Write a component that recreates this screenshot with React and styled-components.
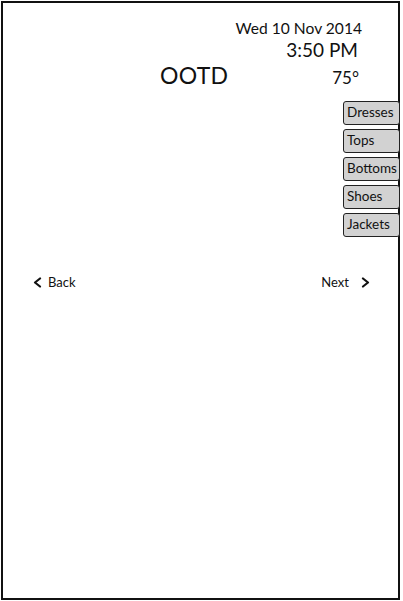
import React from "react";
import styled, { createGlobalStyle } from "styled-components";

const Global = createGlobalStyle`
  html, body { margin: 0; padding: 0; background: #fff; }
  body { font-family: Lato, "Open Sans", sans-serif; color: #111; }
  * { box-sizing: border-box; }
`;

const Frame = styled.div`
  margin: 1px 0 0 1px;
  width: 399px;
  height: 599px;
  border: 2px solid #111;
  display: flex;
  flex-direction: column;
`;

const Header = styled.div`
  display: flex;
  flex-direction: column;
  align-items: flex-end;
  padding: 15px 36px 0 0;
`;

const DateLine = styled.div`
  font-size: 15.6px;
  line-height: 20px;
`;

const TimeLine = styled.div`
  font-size: 19px;
  line-height: 24px;
  margin-right: 4px;
`;

const TitleRow = styled.div`
  align-self: stretch;
  display: flex;
  justify-content: space-between;
  align-items: baseline;
  padding-left: 157px;
`;

const Title = styled.div`
  font-size: 23px;
  line-height: 26px;
  letter-spacing: 0.3px;
`;

const Temp = styled.div`
  font-size: 17px;
  line-height: 22px;
  margin-right: 3px;
`;

const Tabs = styled.div`
  align-self: flex-end;
  display: flex;
  flex-direction: column;
  gap: 4px;
  margin-top: 12px;
  margin-right: -2px;
`;

const Tab = styled.div`
  width: 57px;
  height: 24px;
  background: #d2d2d2;
  border: 1.5px solid #222;
  border-radius: 3px;
  font-size: 13.5px;
  line-height: 21px;
  padding-left: 3px;
  white-space: nowrap;
`;

const NavRow = styled.div`
  display: flex;
  justify-content: space-between;
  align-items: center;
  padding: 0 28px 0 30px;
  margin-top: 37px;
`;

const NavButton = styled.div`
  display: flex;
  align-items: center;
  gap: ${(p) => p.$gap}px;
  font-size: 13px;
  line-height: 16px;
`;

const Chevron = ({ dir }) => (
  <svg width="9" height="11" viewBox="0 0 9 11">
    <path
      d={dir === "left" ? "M7 1.5 L2 5.5 L7 9.5" : "M2 1.5 L7 5.5 L2 9.5"}
      fill="none"
      stroke="#111"
      strokeWidth="2.2"
      strokeLinecap="round"
      strokeLinejoin="round"
    />
  </svg>
);

export default function App() {
  return (
    <>
      <Global />
      <Frame>
        <Header>
          <DateLine>Wed 10 Nov 2014</DateLine>
          <TimeLine>3:50 PM</TimeLine>
          <TitleRow>
            <Title>OOTD</Title>
            <Temp>75°</Temp>
          </TitleRow>
        </Header>
        <Tabs>
          {["Dresses", "Tops", "Bottoms", "Shoes", "Jackets"].map((t) => (
            <Tab key={t}>{t}</Tab>
          ))}
        </Tabs>
        <NavRow>
          <NavButton $gap={6}>
            <Chevron dir="left" />
            Back
          </NavButton>
          <NavButton $gap={12}>
            Next
            <Chevron dir="right" />
          </NavButton>
        </NavRow>
      </Frame>
    </>
  );
}
